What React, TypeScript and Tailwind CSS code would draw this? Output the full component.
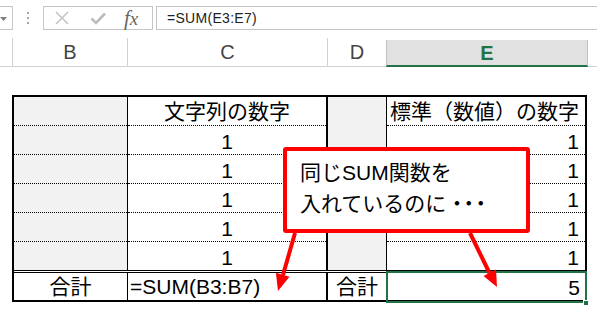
import React from 'react';

const gray = 'bg-[#f2f2f2]';
const dotted = 'border-b border-dotted border-black';
const rows = [1, 1, 1, 1, 1];

// one column of the upper block: header cell + five data cells
const Column: React.FC<{
  head?: React.ReactNode;
  cells: React.ReactNode[];
  className: string;
  cellClass: string;
}> = ({ head, cells, className, cellClass }) => (
  <div className={`flex flex-col ${className}`}>
    <div className={`h-[29px] ${dotted} ${cellClass}`}>{head}</div>
    {cells.map((c, i) => (
      <div
        key={i}
        className={`${i === cells.length - 1 ? 'h-[28px]' : `h-[29px] ${dotted}`} ${cellClass}`}
      >
        {c}
      </div>
    ))}
  </div>
);

const App: React.FC = () => {
  return (
    <div className="relative w-[597px] h-[313px] overflow-hidden bg-white text-black font-['Liberation_Sans','Noto_Sans_CJK_JP',sans-serif]">
      {/* Formula bar */}
      <div className="flex h-[38px] pt-[6px]">
        <div className="w-[13px] h-[24px] border-y border-r border-[#c6c6c6] flex items-center">
          <svg width="7" height="4" viewBox="0 0 7 4" className="mt-[1px]">
            <path d="M0 0h7L3.5 4z" fill="#808080" />
          </svg>
        </div>
        <div className="ml-[14px] h-[24px] flex flex-col justify-center gap-[3px]">
          <div className="w-[2px] h-[2px] bg-[#a6a6a6]" />
          <div className="w-[2px] h-[2px] bg-[#a6a6a6]" />
          <div className="w-[2px] h-[2px] bg-[#a6a6a6]" />
        </div>
        <div className="ml-[14px] w-[110px] h-[24px] border border-[#c6c6c6] flex items-center pl-[11px]">
          <svg width="14" height="14" viewBox="0 0 14 14">
            <path d="M1 1L13 13M13 1L1 13" stroke="#c4c4c4" strokeWidth="1.6" fill="none" />
          </svg>
          <svg width="16" height="13" viewBox="0 0 16 13" className="ml-[21px]">
            <path d="M1.5 6.5l4.5 4.5L15 1.5" stroke="#bdbdbd" strokeWidth="2.6" fill="none" />
          </svg>
          <span className="ml-[18px] text-[19px] leading-none italic text-[#666] font-['Liberation_Serif',serif]">
            <span className="text-[21px]">f</span>x
          </span>
        </div>
        <div className="ml-[3px] flex-1 h-[24px] border-y border-l border-[#c6c6c6] flex items-center pl-[10px] text-[14px] tracking-[0.3px] text-[#222]">
          =SUM(E3:E7)
        </div>
      </div>

      {/* Column headers */}
      <div className="flex h-[29px] text-[20px] text-[#444]">
        <div className="w-[13px] border-r border-b border-[#d0d0d0]" />
        <div className="w-[115px] border-r border-b border-[#d0d0d0] flex items-center justify-center">B</div>
        <div className="w-[200px] border-r border-b border-[#d0d0d0] flex items-center justify-center">C</div>
        <div className="w-[58px] border-b border-[#d0d0d0] flex items-center justify-center">D</div>
        <div className="w-[202px] mt-[2px] bg-[#e1e1e1] border-x border-[#c0c0c0] border-b-2 border-b-[#217346] flex items-center justify-center font-bold text-[#217346]">
          E
        </div>
        <div className="flex-1 border-b border-[#d0d0d0]" />
      </div>

      {/* Table */}
      <div className="ml-[12px] mt-[28px] w-[575px] border-2 border-black text-[21px] leading-none">
        <div className="flex border-b-[3px] border-double border-black">
          <Column className={`w-[114px] border-r border-black ${gray}`} cellClass="" cells={rows.map(() => null)} />
          <Column
            className="w-[200px] border-r-2 border-black"
            cellClass="flex items-center justify-center"
            head={<span className="mt-[1px]">文字列の数字</span>}
            cells={rows.map((v) => <span className="mt-[2px]">{v}</span>)}
          />
          <div className={`w-[59px] border-r border-black ${gray}`} />
          <Column
            className="flex-1"
            cellClass="flex items-center justify-end pr-[6px]"
            head={<span className="mt-[1px]">標準（数値）の数字</span>}
            cells={rows.map((v) => <span className="mt-[2px]">{v}</span>)}
          />
        </div>

        {/* Total row */}
        <div className="flex h-[27px]">
          <div className="w-[114px] border-r border-black flex items-center justify-center">合計</div>
          <div className="w-[200px] border-r-2 border-black flex items-center pl-[2px]">=SUM(B3:B7)</div>
          <div className="w-[59px] border-r border-black flex items-center justify-center">合計</div>
          <div className="relative flex-1 flex items-center justify-end pr-[5px]">
            <span className="mt-[2px]">5</span>
            <div className="absolute -left-[1px] -right-[2px] -top-[2px] -bottom-[3px] border-2 border-[#217346]" />
            <div className="absolute -right-[4px] -bottom-[6px] w-[6px] h-[6px] bg-[#217346] border border-white" />
          </div>
        </div>
      </div>

      {/* Callout */}
      <div className="absolute left-[283px] top-[147px] w-[247px] h-[86px] border-4 border-[#f00] rounded-[3px] bg-white pl-[13px] pt-[6px] text-[21px] leading-[31px]">
        <div>同じSUM関数を</div>
        <div>
          入れているのに<span className="tracking-[-9px]">・・・</span>
        </div>
      </div>

      {/* Arrows */}
      <svg className="absolute inset-0 pointer-events-none" width="597" height="313" viewBox="0 0 597 313">
        <line x1="295" y1="233" x2="283" y2="275" stroke="#f00" strokeWidth="4" />
        <polygon points="278,291 289.5,276.7 275.9,272.7" fill="#f00" />
        <line x1="470" y1="233" x2="489.5" y2="273" stroke="#f00" strokeWidth="4" />
        <polygon points="497,287 496,269.5 483.5,276" fill="#f00" />
      </svg>
    </div>
  );
};

export default App;
